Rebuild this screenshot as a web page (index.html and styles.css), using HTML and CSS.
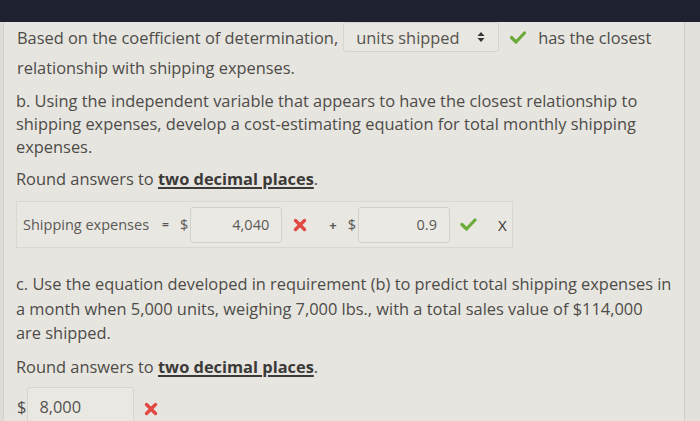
FILE: index.html
```html
<!DOCTYPE html>
<html>
<head>
<meta charset="utf-8">
<link rel="stylesheet" href="styles.css">
</head>
<body>
<div class="topbar"></div>
<div class="page">
  <div class="edge-left"></div>
  <div class="content">
    <div class="line-first">
      <span class="lead">Based on the coefficient of determination,</span>
      <span class="select">units shipped
        <svg class="updown" width="8" height="12" viewBox="0 0 8 12"><path d="M0.5 5 L4 1 L7.5 5 Z M0.5 7 L4 11 L7.5 7 Z" fill="#333"/></svg>
      </span>
      <svg class="check" width="16" height="13" viewBox="0 0 16 13"><path d="M1.5 6.5 L6 11 L14.5 2" fill="none" stroke="#6bab3a" stroke-width="3.2" stroke-linecap="round" stroke-linejoin="round"/></svg>
      <span class="after">has the closest</span>
    </div>
    <p class="line">relationship with shipping expenses.</p>
    <p class="para para-b">b. Using the independent variable that appears to have the closest relationship to<br>shipping expenses, develop a cost-estimating equation for total monthly shipping<br>expenses.</p>
    <p class="round">Round answers to <span class="emph">two decimal places</span>.</p>
    <div class="eqbox">
      <span class="eqlabel">Shipping expenses</span>
      <span class="eqsign">=</span>
      <span class="dollar">$</span>
      <span class="field">4,040</span>
      <svg class="cross" width="14" height="14" viewBox="0 0 14 14"><path d="M2.5 2.5 L11.5 11.5 M11.5 2.5 L2.5 11.5" stroke="#e04a43" stroke-width="3.4" stroke-linecap="round"/></svg>
      <span class="plus">+</span>
      <span class="dollar">$</span>
      <span class="field">0.9</span>
      <svg class="check2" width="17" height="13" viewBox="0 0 16 13"><path d="M1.5 6.5 L6 11 L14.5 2" fill="none" stroke="#6bab3a" stroke-width="3.2" stroke-linecap="round" stroke-linejoin="round"/></svg>
      <span class="xvar">X</span>
    </div>
    <p class="para para-c">c. Use the equation developed in requirement (b) to predict total shipping expenses in<br>a month when 5,000 units, weighing 7,000 lbs., with a total sales value of $114,000<br>are shipped.</p>
    <p class="round round-c">Round answers to <span class="emph">two decimal places</span>.</p>
    <div class="answer">
      <span class="dollar-c">$</span>
      <span class="field-c">8,000</span>
      <svg class="cross-c" width="14" height="14" viewBox="0 0 14 14"><path d="M2.5 2.5 L11.5 11.5 M11.5 2.5 L2.5 11.5" stroke="#e04a43" stroke-width="3.4" stroke-linecap="round"/></svg>
    </div>
  </div>
  <div class="edge-right"></div>
</div>
</body>
</html>
```

FILE: styles.css
```css
html, body {
  margin: 0;
  padding: 0;
  height: 100%;
  overflow: hidden;
}
body {
  background: #e7e5df;
  font-family: "Open Sans", "DejaVu Sans", sans-serif;
  color: #4d4c49;
}
.topbar {
  height: 22px;
  background: #1e2130;
}
.page {
  display: flex;
  height: 399px;
}
.edge-left {
  width: 3px;
  background: #dedcd6;
  border-right: 1px solid #d3d1cb;
}
.content {
  width: 668px;
  padding-left: 12px;
  font-size: 16.4px;
  overflow: hidden;
  white-space: nowrap;
}
.edge-right {
  flex: 1;
  border-left: 1px solid #cfcdc7;
  background: #e3e1db;
}
p { margin: 0; }
.line-first {
  display: flex;
  align-items: center;
  height: 30px;
  margin-top: 0;
}
.lead { margin-left: 1px; }
.select {
  display: inline-flex;
  align-items: center;
  justify-content: space-between;
  box-sizing: border-box;
  width: 156px;
  height: 30px;
  margin-left: 5px;
  padding: 0 13px 0 12px;
  border: 1px solid #d6d4ce;
  border-radius: 3px;
  background: #e9e7e1;
  color: #55534f;
}
.check { margin-left: 11px; }
.after { margin-left: 12px; }
.line {
  line-height: 23px;
  margin-top: 4px;
  margin-left: 1px;
}
.para {
  line-height: 23px;
}
.para-b { margin-top: 10px; }
.round {
  line-height: 23px;
  margin-top: 9px;
}
.emph {
  font-weight: 700;
  text-decoration: underline;
  text-decoration-thickness: 1.5px;
  text-underline-offset: 2px;
  color: #3b3a38;
}
.eqbox {
  display: flex;
  align-items: center;
  box-sizing: border-box;
  width: 497px;
  height: 47px;
  margin-top: 11px;
  border: 1px solid #d9d7d1;
  background: #e9e7e2;
  font-size: 14.5px;
  color: #5a5955;
}
.eqlabel { margin-left: 6px; }
.eqsign { margin-left: 13px; font-weight: 700; font-size: 12px; }
.dollar { margin-left: 11px; }
.field {
  width: 78px;
  height: 34px;
  margin-left: 2px;
  padding-right: 12px;
  border: 1px solid #d2d0ca;
  border-radius: 3px;
  background: #ebe9e4;
  line-height: 34px;
  text-align: right;
  color: #5a5955;
}
.cross { margin-left: 11px; }
.plus { margin-left: 22px; font-size: 13px; font-weight: 700; }
.check2 { margin-left: 10px; }
.xvar { margin-left: 21px; font-size: 15px; color: #333; }
.para-c {
  margin-top: 24px;
  line-height: 24.5px;
}
.round-c { margin-top: 9px; }
.answer {
  display: flex;
  align-items: center;
  margin-top: 9px;
  margin-left: 1px;
}
.field-c {
  width: 94px;
  height: 38px;
  margin-left: 1px;
  padding-left: 11px;
  border: 1px solid #d6d4ce;
  border-radius: 3px;
  background: #eae8e3;
  line-height: 38px;
  color: #55534f;
}
.cross-c { margin-left: 10px; margin-top: 4px; }
```
